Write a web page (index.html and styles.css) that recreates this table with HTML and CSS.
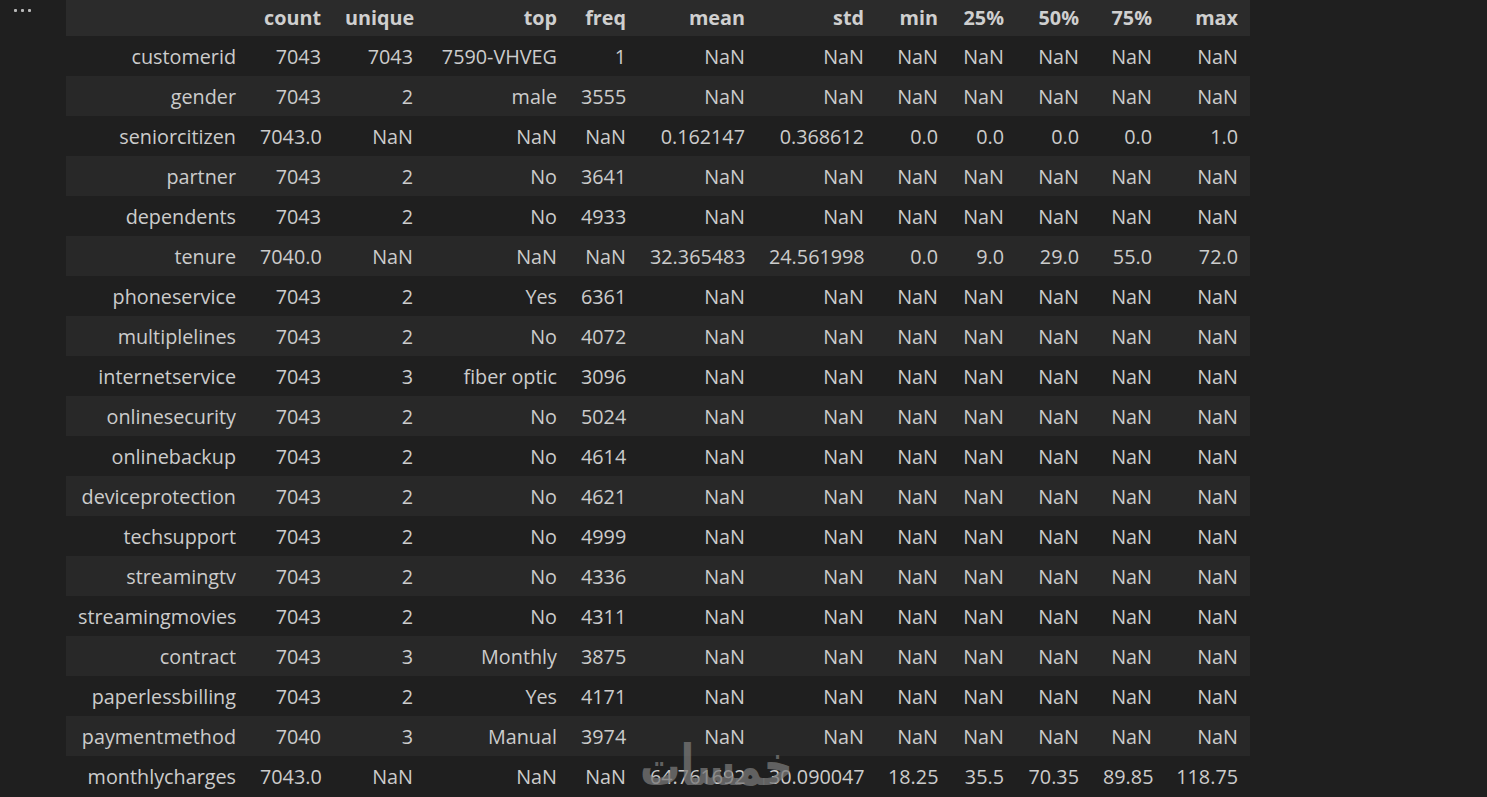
FILE: index.html
```html
<!DOCTYPE html>
<html>
<head>
<meta charset="utf-8">
<link rel="stylesheet" href="styles.css">
</head>
<body>
<div class="cell">
  <div class="gutter"><span class="dot"></span><span class="dot"></span><span class="dot"></span></div>
  <div class="output">
    <table class="df">
      <colgroup>
        <col style="width:182px"><col style="width:85px"><col style="width:92px"><col style="width:144px"><col style="width:69px"><col style="width:119px"><col style="width:119px"><col style="width:74px"><col style="width:66px"><col style="width:75px"><col style="width:73px"><col style="width:86px">
      </colgroup>
      <thead>
        <tr><th></th><th>count</th><th>unique</th><th>top</th><th>freq</th><th>mean</th><th>std</th><th>min</th><th>25%</th><th>50%</th><th>75%</th><th>max</th></tr>
      </thead>
      <tbody>
        <tr><th>customerid</th><td>7043</td><td>7043</td><td>7590-VHVEG</td><td>1</td><td>NaN</td><td>NaN</td><td>NaN</td><td>NaN</td><td>NaN</td><td>NaN</td><td>NaN</td></tr>
        <tr><th>gender</th><td>7043</td><td>2</td><td>male</td><td>3555</td><td>NaN</td><td>NaN</td><td>NaN</td><td>NaN</td><td>NaN</td><td>NaN</td><td>NaN</td></tr>
        <tr><th>seniorcitizen</th><td>7043.0</td><td>NaN</td><td>NaN</td><td>NaN</td><td>0.162147</td><td>0.368612</td><td>0.0</td><td>0.0</td><td>0.0</td><td>0.0</td><td>1.0</td></tr>
        <tr><th>partner</th><td>7043</td><td>2</td><td>No</td><td>3641</td><td>NaN</td><td>NaN</td><td>NaN</td><td>NaN</td><td>NaN</td><td>NaN</td><td>NaN</td></tr>
        <tr><th>dependents</th><td>7043</td><td>2</td><td>No</td><td>4933</td><td>NaN</td><td>NaN</td><td>NaN</td><td>NaN</td><td>NaN</td><td>NaN</td><td>NaN</td></tr>
        <tr><th>tenure</th><td>7040.0</td><td>NaN</td><td>NaN</td><td>NaN</td><td>32.365483</td><td>24.561998</td><td>0.0</td><td>9.0</td><td>29.0</td><td>55.0</td><td>72.0</td></tr>
        <tr><th>phoneservice</th><td>7043</td><td>2</td><td>Yes</td><td>6361</td><td>NaN</td><td>NaN</td><td>NaN</td><td>NaN</td><td>NaN</td><td>NaN</td><td>NaN</td></tr>
        <tr><th>multiplelines</th><td>7043</td><td>2</td><td>No</td><td>4072</td><td>NaN</td><td>NaN</td><td>NaN</td><td>NaN</td><td>NaN</td><td>NaN</td><td>NaN</td></tr>
        <tr><th>internetservice</th><td>7043</td><td>3</td><td>fiber optic</td><td>3096</td><td>NaN</td><td>NaN</td><td>NaN</td><td>NaN</td><td>NaN</td><td>NaN</td><td>NaN</td></tr>
        <tr><th>onlinesecurity</th><td>7043</td><td>2</td><td>No</td><td>5024</td><td>NaN</td><td>NaN</td><td>NaN</td><td>NaN</td><td>NaN</td><td>NaN</td><td>NaN</td></tr>
        <tr><th>onlinebackup</th><td>7043</td><td>2</td><td>No</td><td>4614</td><td>NaN</td><td>NaN</td><td>NaN</td><td>NaN</td><td>NaN</td><td>NaN</td><td>NaN</td></tr>
        <tr><th>deviceprotection</th><td>7043</td><td>2</td><td>No</td><td>4621</td><td>NaN</td><td>NaN</td><td>NaN</td><td>NaN</td><td>NaN</td><td>NaN</td><td>NaN</td></tr>
        <tr><th>techsupport</th><td>7043</td><td>2</td><td>No</td><td>4999</td><td>NaN</td><td>NaN</td><td>NaN</td><td>NaN</td><td>NaN</td><td>NaN</td><td>NaN</td></tr>
        <tr><th>streamingtv</th><td>7043</td><td>2</td><td>No</td><td>4336</td><td>NaN</td><td>NaN</td><td>NaN</td><td>NaN</td><td>NaN</td><td>NaN</td><td>NaN</td></tr>
        <tr><th>streamingmovies</th><td>7043</td><td>2</td><td>No</td><td>4311</td><td>NaN</td><td>NaN</td><td>NaN</td><td>NaN</td><td>NaN</td><td>NaN</td><td>NaN</td></tr>
        <tr><th>contract</th><td>7043</td><td>3</td><td>Monthly</td><td>3875</td><td>NaN</td><td>NaN</td><td>NaN</td><td>NaN</td><td>NaN</td><td>NaN</td><td>NaN</td></tr>
        <tr><th>paperlessbilling</th><td>7043</td><td>2</td><td>Yes</td><td>4171</td><td>NaN</td><td>NaN</td><td>NaN</td><td>NaN</td><td>NaN</td><td>NaN</td><td>NaN</td></tr>
        <tr><th>paymentmethod</th><td>7040</td><td>3</td><td>Manual</td><td>3974</td><td>NaN</td><td>NaN</td><td>NaN</td><td>NaN</td><td>NaN</td><td>NaN</td><td>NaN</td></tr>
        <tr><th>monthlycharges</th><td>7043.0</td><td>NaN</td><td>NaN</td><td>NaN</td><td>64.761692</td><td>30.090047</td><td>18.25</td><td>35.5</td><td>70.35</td><td>89.85</td><td>118.75</td></tr>
      </tbody>
    </table>
  </div>
</div>
<div class="watermark">خمسات</div>
</body>
</html>
```

FILE: styles.css
```css
html, body {
  margin: 0;
  padding: 0;
  background: #1f1f1f;
  height: 100%;
  overflow: hidden;
}
body {
  font-family: "Open Sans", "Noto Sans", sans-serif;
  color: #cccccc;
}
.cell {
  display: flex;
  align-items: flex-start;
}
.gutter {
  width: 66px;
  flex: none;
  display: flex;
  gap: 4px;
  padding: 9px 0 0 14px;
  box-sizing: border-box;
}
.dot {
  width: 3px;
  height: 3px;
  background: #b8b8b8;
  border-radius: 1px;
}
.df {
  border-collapse: collapse;
  table-layout: fixed;
  width: 1184px;
  font-size: 19.8px;
}
.df th, .df td {
  padding: 1px 12px 0;
  text-align: right;
  white-space: nowrap;
  overflow: visible;
}
.df thead tr {
  height: 36px;
}
.df thead th {
  padding: 0 12px 1px;
  line-height: 35px;
  font-weight: 700;
  background: #2b2b2b;
  color: #cfcfcf;
  vertical-align: middle;
}
.df tbody th {
  font-weight: 400;
}
.df tbody tr {
  height: 40px;
}
.df tbody tr:nth-child(even) {
  background: #282828;
}
.watermark {
  position: absolute;
  left: 640px;
  top: 738px;
  font-family: "DejaVu Sans", sans-serif;
  font-weight: 700;
  font-size: 56px;
  line-height: 1;
  color: rgba(120, 120, 120, 0.75);
  transform: scaleX(0.72);
  transform-origin: left top;
  pointer-events: none;
}
```
